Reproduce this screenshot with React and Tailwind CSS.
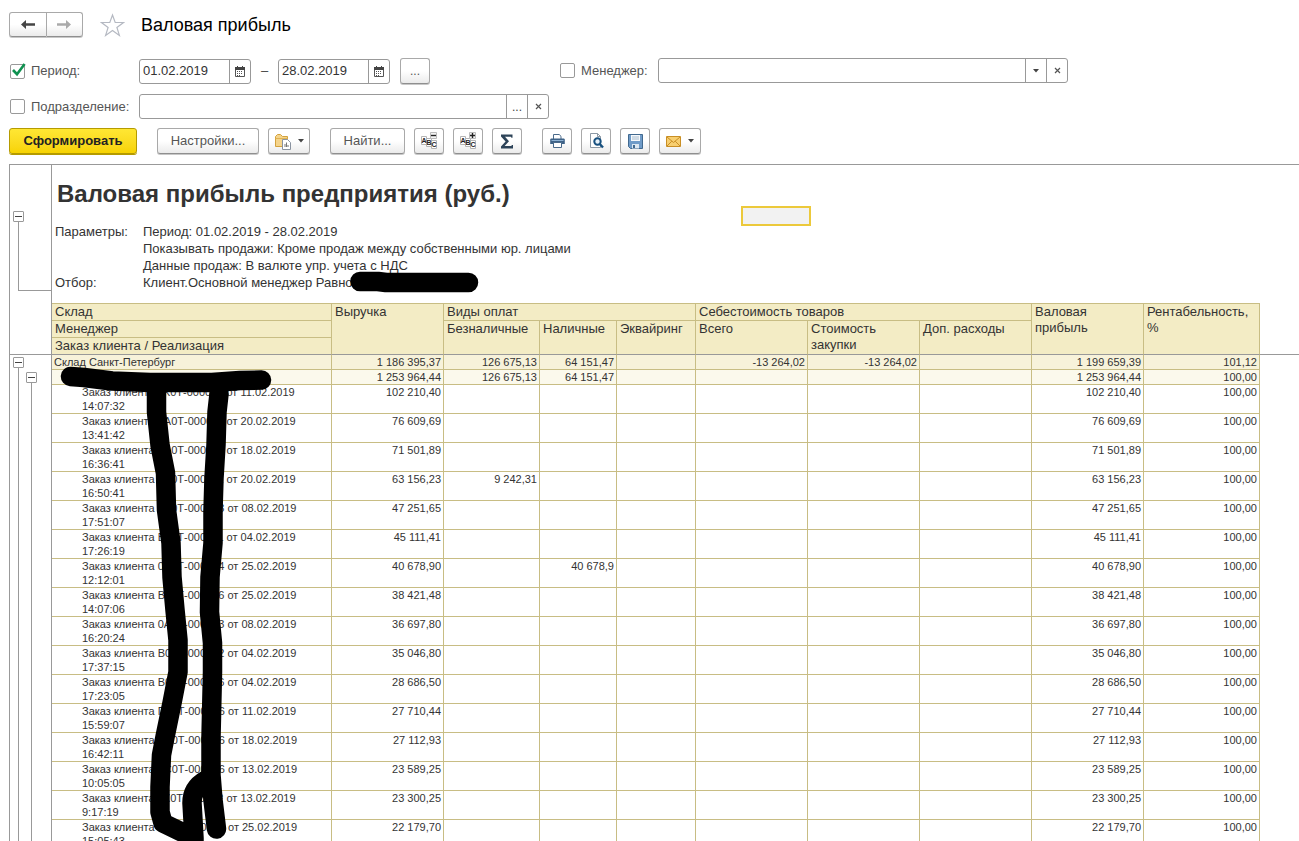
import React from 'react';
import clsx from 'clsx';

const orders = [
  { number: '0К0Т-000016', date: '11.02.2019 14:07:32', revenue: '102 210,40' },
  { number: '0А0Т-000011', date: '20.02.2019 13:41:42', revenue: '76 609,69' },
  { number: '0А0Т-000011', date: '18.02.2019 16:36:41', revenue: '71 501,89' },
  { number: '0А0Т-000011', date: '20.02.2019 16:50:41', revenue: '63 156,23', cashless: '9 242,31' },
  { number: '0А0Т-000013', date: '08.02.2019 17:51:07', revenue: '47 251,65' },
  { number: 'В00Т-000011', date: '04.02.2019 17:26:19', revenue: '45 111,41' },
  { number: '0А0Т-000024', date: '25.02.2019 12:12:01', revenue: '40 678,90', cash: '40 678,9' },
  { number: 'В00Т-000026', date: '25.02.2019 14:07:06', revenue: '38 421,48' },
  { number: '0А0Т-000013', date: '08.02.2019 16:20:24', revenue: '36 697,80' },
  { number: 'В00Т-000012', date: '04.02.2019 17:37:15', revenue: '35 046,80' },
  { number: 'В00Т-000016', date: '04.02.2019 17:23:05', revenue: '28 686,50' },
  { number: 'П00Т-000016', date: '11.02.2019 15:59:07', revenue: '27 710,44' },
  { number: '0С0Т-000016', date: '18.02.2019 16:42:11', revenue: '27 112,93' },
  { number: '0С0Т-000016', date: '13.02.2019 10:05:05', revenue: '23 589,25' },
  { number: '0К0Т-000012', date: '13.02.2019 9:17:19', revenue: '23 300,25' },
  { number: '0С0Т-000025', date: '25.02.2019 15:05:43', revenue: '22 179,70' },
];

const buttonBase =
  'flex items-center justify-center rounded-[3px] border border-[#a9a9a9] border-b-[#8f8f8f] bg-linear-to-b from-white from-50% to-[#ebebeb] text-[#555] shadow-[0_1px_0_#c8c8c8]';

const Button = ({ className, children, ...props }) => (
  <button type="button" className={clsx(buttonBase, 'h-[26px]', className)} {...props}>
    {children}
  </button>
);

const Caret = () => (
  <svg width="6" height="4" viewBox="0 0 6 4" fill="#444">
    <path d="M0 0h6L3 3.5z" />
  </svg>
);

const Cross = () => (
  <svg width="7" height="7" viewBox="0 0 7 7" stroke="#555" strokeWidth="1.2">
    <path d="M1 1l5 5M6 1L1 6" />
  </svg>
);

const Calendar = () => (
  <svg width="10" height="11" viewBox="0 0 10 11" fill="none">
    <path d="M.5 2.5h9v8h-9z" stroke="#555" />
    <path d="M0 1h10v3H0zM2 0h1v3H2zM7 0h1v3H7z" fill="#444" />
    <path d="M2 5.5h6M2 7.5h6M2 9.5h4" stroke="#555" strokeDasharray="1 1" />
  </svg>
);

const Field = ({ className, label, value = '', actions }) => (
  <div className={clsx('flex h-[25px] rounded-[3px] border border-[#999] bg-white', className)}>
    <input
      aria-label={label}
      defaultValue={value}
      className="min-w-0 flex-1 rounded-[3px] px-[3px] text-[#333] outline-none"
    />
    {actions.map((action) => (
      <button
        key={action.name}
        type="button"
        aria-label={action.name}
        className="flex w-[21px] shrink-0 items-center justify-center border-l border-[#999] text-xs text-[#444]"
      >
        {action.icon}
      </button>
    ))}
  </div>
);

const CheckLabel = ({ className, checked, children }) => (
  <label className={clsx('flex items-center gap-[5px] text-[#555]', className)}>
    <span className="relative flex h-[15px] w-4 shrink-0">
      <input
        type="checkbox"
        defaultChecked={checked}
        className="peer h-[15px] w-[15px] appearance-none rounded-[2px] border border-[#999] bg-white"
      />
      <svg
        className="pointer-events-none absolute -top-px left-px hidden peer-checked:block"
        width="15"
        height="14"
        viewBox="0 0 15 14"
        fill="none"
        stroke="#0f9150"
        strokeWidth="2.6"
      >
        <path d="M2 7l4 4.2L13.6 1" />
      </svg>
    </span>
    {children}
  </label>
);

const SheetLetters = ({ plus }) => (
  <svg width="17" height="18" viewBox="0 0 17 18" fill="none">
    <path d="M.5 4.5h5v8h-5zM5.5 6.5h5v8h-5zM10.5 8.500h5v8h-5z" fill="#fff" stroke="#b5b5b5" />
    <g fill="#222" fontSize="7" fontWeight="bold" textAnchor="middle">
      <text x="3" y="11">A</text>
      <text x="8" y="13">B</text>
      <text x="13" y="15">C</text>
    </g>
    <path d="M9.500.5h6v6h-6z" fill="#f4f4f4" stroke="#bbb" />
    <path d={plus ? 'M10 3.5h5M12.500 1v5' : 'M10 3.5h5'} stroke="#222" strokeWidth="1.4" />
  </svg>
);

const FolderIcon = () => (
  <svg width="18" height="17" viewBox="0 0 18 17" fill="none">
    <path d="M1.5 13.5v-10l2-2h3l2 2h5v10z" fill="#f5d48b" stroke="#d3a23e" />
    <path d="M1.5 5.5h12" stroke="#e0b352" />
    <path d="M8.5 6.5h5l3 3v7h-8z" fill="#fff" stroke="#8a93a0" />
    <path d="M11 14v-3M12.5 14v-4.5M14 14v-2" stroke="#777" />
  </svg>
);

const SigmaIcon = () => (
  <svg width="14" height="15" viewBox="0 0 14 15" fill="#2e4459">
    <path d="M1 .5h11.500v3.200h-1L10.800 2.800H5l4 4.500L4.600 12h6.600l.8-1h1v3.500H1v-2l4.600-5L1 2.500z" />
  </svg>
);

const PrinterIcon = () => (
  <svg width="15" height="14" viewBox="0 0 15 14" fill="none">
    <path d="M3.500 5V.5h5.700l1.800 1.800V5" fill="#fff" stroke="#4a6a8a" />
    <path d="M1 4.500h13l.8.8V10H.2V5.300z" fill="#3f6388" />
    <path d="M1.500 6.500h12" stroke="#8cb0d2" />
    <path d="M3.500 8.500h8v5h-8z" fill="#fff" stroke="#4a6a8a" />
  </svg>
);

const PreviewIcon = () => (
  <svg width="15" height="16" viewBox="0 0 15 16" fill="none">
    <path d="M1.500.5h7l3 3v11h-10z" fill="#fff" stroke="#8d99a5" />
    <path d="M8.500.5v3h3" stroke="#8d99a5" />
    <circle cx="8.500" cy="8.500" r="3.200" fill="#e8f2fa" stroke="#17507f" strokeWidth="2" />
    <path d="M10.800 11l3.200 3.500" stroke="#17507f" strokeWidth="2.400" />
  </svg>
);

const SaveIcon = () => (
  <svg width="15" height="15" viewBox="0 0 15 15" fill="none">
    <path d="M.5.5h14v14h-12l-2-2z" fill="#6f9bc8" stroke="#41698f" />
    <path d="M3 1h9v6H3z" fill="#f5f8fb" />
    <path d="M4 3h7M4 5h7" stroke="#a8bccd" />
    <path d="M4 10h7v4.500H4z" fill="#dce7f1" />
    <path d="M5 11h2v3H5z" fill="#41698f" />
  </svg>
);

const MailIcon = () => (
  <svg width="15" height="11" viewBox="0 0 15 11" fill="none" stroke="#c98f25">
    <path d="M.5.5h14v10H.5z" fill="#f8cf70" />
    <path d="M1 1l6.500 5.500L14 1M1 10l4.800-4.800M14 10L9.200 5.200" />
  </svg>
);

const Collapse = () => (
  <button
    type="button"
    aria-label="Свернуть"
    className="flex h-[11px] w-[11px] shrink-0 items-center justify-center rounded-[1px] border border-[#999] bg-white"
  >
    <span className="h-px w-[7px] bg-[#444]" />
  </button>
);

const Th = ({ className, children, ...props }) => (
  <th
    className={clsx(
      'border-r border-[#c8bd84] bg-[#f3ecc5] pl-[3px] text-left align-top leading-4 font-normal',
      className
    )}
    {...props}
  >
    {children}
  </th>
);

const Row = ({ name, nameClass, className, values }) => (
  <tr className={className}>
    <td className={clsx('border-r border-b border-[#c8bd84] pr-[2px] align-top', nameClass)}>{name}</td>
    {values.map((value, i) => (
      <td key={i} className="h-[15px] border-r border-b border-[#c8bd84] pr-[2px] text-right align-top">
        {value}
      </td>
    ))}
    <td className="bg-white" />
  </tr>
);

const TitleBar = () => (
  <header className="flex items-center">
    <div className="flex h-[25px] w-[74px]">
      <button type="button" aria-label="Назад" className={clsx(buttonBase, 'flex-1 rounded-r-none')}>
        <svg width="14" height="9" viewBox="0 0 14 9" fill="#444">
          <path d="M0 4.500L5 0v3.200h9v2.600H5V9z" />
        </svg>
      </button>
      <button type="button" aria-label="Вперед" className={clsx(buttonBase, 'flex-1 rounded-l-none border-l-0')}>
        <svg width="14" height="9" viewBox="0 0 14 9" fill="#aaa">
          <path d="M14 4.500L9 0v3.200H0v2.600h9V9z" />
        </svg>
      </button>
    </div>
    <svg className="ml-[17px]" width="25" height="24" viewBox="0 0 25 24" fill="none" stroke="#b5b9c2" strokeWidth="1.2">
      <path d="M12.500 2l2.700 7.500h8.300l-6.600 4.900 2.500 8-6.900-4.900-6.900 4.900 2.500-8-6.600-4.900h8.300z" />
    </svg>
    <h1 className="ml-4 text-lg leading-6 text-black">Валовая прибыль</h1>
  </header>
);

const Filters = () => (
  <div className="mt-[21px] flex items-start">
    <div className="flex w-[551px] shrink-0 flex-col gap-[10px]">
      <div className="flex items-center">
        <CheckLabel className="w-[130px] pl-px" checked>Период:</CheckLabel>
        <Field
          className="w-[112px]"
          label="Начало периода"
          value="01.02.2019"
          actions={[{ name: 'Выбрать начало', icon: <Calendar /> }]}
        />
        <span className="w-[27px] text-center text-[#444]">–</span>
        <Field
          className="w-[112px]"
          label="Конец периода"
          value="28.02.2019"
          actions={[{ name: 'Выбрать конец', icon: <Calendar /> }]}
        />
        <Button className="ml-[10px] w-[30px] text-xs" aria-label="Выбрать период">...</Button>
      </div>
      <div className="flex items-center">
        <CheckLabel className="w-[130px] pl-px">Подразделение:</CheckLabel>
        <Field
          className="w-[410px]"
          label="Подразделение"
          actions={[
            { name: 'Выбрать подразделение', icon: '...' },
            { name: 'Очистить подразделение', icon: <Cross /> },
          ]}
        />
      </div>
    </div>
    <div className="flex items-center">
      <CheckLabel className="w-[98px]">Менеджер:</CheckLabel>
      <Field
        className="w-[410px]"
        label="Менеджер"
        actions={[
          { name: 'Список менеджеров', icon: <Caret /> },
          { name: 'Очистить менеджера', icon: <Cross /> },
        ]}
      />
    </div>
  </div>
);

const Toolbar = () => (
  <div className="mt-[9px] flex gap-5">
    <button
      type="button"
      className="h-[26px] w-32 rounded-[3px] border border-[#b59b00] bg-linear-to-b from-[#ffe733] to-[#f7d300] font-bold text-[#222] shadow-[0_1px_0_#b59b00]"
    >
      Сформировать
    </button>
    <div className="flex gap-[9px]">
      <Button className="w-[102px]">Настройки...</Button>
      <Button className="w-[42px] gap-[6px]" aria-label="Варианты отчета">
        <FolderIcon />
        <Caret />
      </Button>
    </div>
    <div className="flex gap-[9px]">
      <Button className="w-[75px]">Найти...</Button>
      <Button className="w-[30px]" aria-label="Свернуть группы"><SheetLetters /></Button>
      <Button className="w-[30px]" aria-label="Развернуть группы"><SheetLetters plus /></Button>
      <Button className="w-[30px]" aria-label="Сумма"><SigmaIcon /></Button>
    </div>
    <div className="flex gap-[9px]">
      <Button className="w-[30px]" aria-label="Печать"><PrinterIcon /></Button>
      <Button className="w-[30px]" aria-label="Предварительный просмотр"><PreviewIcon /></Button>
      <Button className="w-[30px]" aria-label="Сохранить"><SaveIcon /></Button>
      <Button className="w-[42px] gap-[7px]" aria-label="Отправить">
        <MailIcon />
        <Caret />
      </Button>
    </div>
  </div>
);

const Gutter = () => (
  <div className="flex w-[42px] shrink-0 flex-col border-r border-[#999]">
    <div className="flex h-[190px] flex-col border-b border-[#999] pt-[46px] pl-[3px]">
      <Collapse />
      <div className="ml-[5px] h-[69px] border-b border-l border-[#999]" />
    </div>
    <div className="flex flex-1 gap-[2px] pl-[3px]">
      <div className="flex flex-col pt-[2px]">
        <Collapse />
        <div className="ml-[5px] w-px flex-1 bg-[#999]" />
      </div>
      <div className="flex flex-col pt-[17px]">
        <Collapse />
        <div className="ml-[5px] w-px flex-1 bg-[#999]" />
      </div>
    </div>
  </div>
);

const ReportTable = () => (
  <table className="w-full table-fixed border-separate border-spacing-0 text-[#333]">
    <colgroup>
      <col className="w-[280px]" />
      <col className="w-[112px]" />
      <col className="w-[96px]" />
      <col className="w-[77px]" />
      <col className="w-[79px]" />
      <col className="w-[112px]" />
      <col className="w-[112px]" />
      <col className="w-[112px]" />
      <col className="w-[112px]" />
      <col className="w-[116px]" />
      <col />
    </colgroup>
    <thead>
      <tr>
        <Th className="border-t border-b">Склад</Th>
        <Th className="border-t border-b border-b-[#999]" rowSpan={3}>Выручка</Th>
        <Th className="border-t border-b" colSpan={3}>Виды оплат</Th>
        <Th className="border-t border-b" colSpan={3}>Себестоимость товаров</Th>
        <Th className="border-t border-b border-b-[#999]" rowSpan={3}>Валовая<br />прибыль</Th>
        <Th className="border-t border-b border-b-[#999]" rowSpan={3}>Рентабельность, %</Th>
        <td className="border-b border-[#999]" rowSpan={3} />
      </tr>
      <tr>
        <Th className="border-b">Менеджер</Th>
        <Th className="border-b border-b-[#999]" rowSpan={2}>Безналичные</Th>
        <Th className="border-b border-b-[#999]" rowSpan={2}>Наличные</Th>
        <Th className="border-b border-b-[#999]" rowSpan={2}>Эквайринг</Th>
        <Th className="border-b border-b-[#999]" rowSpan={2}>Всего</Th>
        <Th className="border-b border-b-[#999]" rowSpan={2}>Стоимость закупки</Th>
        <Th className="border-b border-b-[#999]" rowSpan={2}>Доп. расходы</Th>
      </tr>
      <tr>
        <Th className="border-b border-b-[#999]">Заказ клиента / Реализация</Th>
      </tr>
    </thead>
    <tbody className="text-[11px] leading-[14px]">
      <Row
        className="bg-[#f7f2da]"
        nameClass="pl-[2px]"
        name="Склад Санкт-Петербург"
        values={['1 186 395,37', '126 675,13', '64 151,47', '', '-13 264,02', '-13 264,02', '', '1 199 659,39', '101,12']}
      />
      <Row
        className="bg-[#fbf9ec]"
        nameClass="pl-4"
        values={['1 253 964,44', '126 675,13', '64 151,47', '', '', '', '', '1 253 964,44', '100,00']}
      />
      {orders.map((order) => (
        <Row
          key={order.date}
          nameClass="pl-[30px]"
          name={`Заказ клиента ${order.number} от ${order.date}`}
          values={[order.revenue, order.cashless, order.cash, '', '', '', '', order.revenue, '100,00']}
        />
      ))}
    </tbody>
  </table>
);

const Marker = () => (
  <svg
    className="pointer-events-none absolute inset-0 h-full w-full"
    fill="none"
    stroke="#000"
    strokeWidth="19.500"
    strokeLinecap="round"
    strokeLinejoin="round"
  >
    <path d="M360 281.500H378L386 282.500H468.500" />
    <path d="M70.500 376.500L84 377.500L112 381L150 382.500L212 382.500L240 380.500L261.500 380" />
    <path d="M156.500 386V412L160 445L165.500 473L166.500 510L171 543L172 577L175 610L178 640V672L172 703L165 737L161.500 755L160 787V812L163 823L194 838V845M194 838L192 803Q192 788 206 780" />
    <path d="M219 394L217 412L216 445L214 478L213 511V543L210 577L209.500 612L212.500 643V672L211 737V775L213 800L216.500 829" />
  </svg>
);

export default function App() {
  return (
    <div className="relative flex h-screen flex-col overflow-hidden bg-white pt-3 pl-[9px] font-['Liberation_Sans',Arial,sans-serif] text-[13px]">
      <TitleBar />
      <Filters />
      <Toolbar />
      <main className="mt-[10px] flex min-h-0 flex-1 border-t border-l border-[#999]">
        <Gutter />
        <div className="relative min-w-0 flex-1">
          <h2 className="flex h-[58px] items-center pl-[5px] text-2xl font-bold text-[#333]">
            Валовая прибыль предприятия (руб.)
          </h2>
          <dl className="grid grid-cols-[88px_1fr] pb-3 pl-[3px] leading-[17px] text-[#333]">
            <dt>Параметры:</dt>
            <dd>
              Период: 01.02.2019 - 28.02.2019
              <br />
              Показывать продажи: Кроме продаж между собственными юр. лицами
              <br />
              Данные продаж: В валюте упр. учета с НДС
            </dd>
            <dt>Отбор:</dt>
            <dd>Клиент.Основной менеджер Равно</dd>
          </dl>
          <div className="absolute top-[41px] left-[689px] h-5 w-[70px] border-2 border-[#ecc93b] bg-[#f2f2f2]" />
          <ReportTable />
        </div>
      </main>
      <Marker />
    </div>
  );
}
